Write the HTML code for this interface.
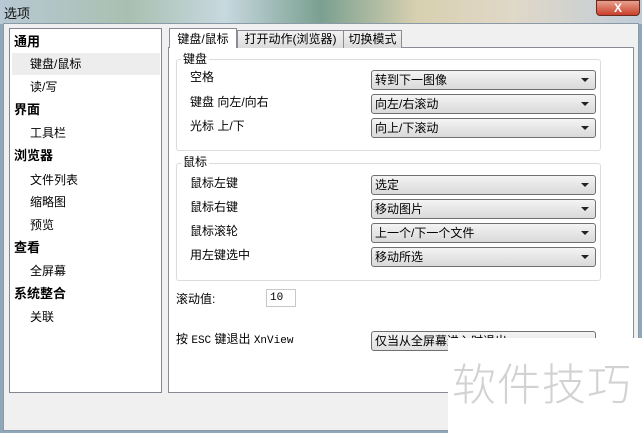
<!DOCTYPE html><html><head><meta charset="utf-8"><style>
*{margin:0;padding:0;box-sizing:border-box}
body{width:642px;height:433px;overflow:hidden;position:relative;font-family:"Liberation Sans","Noto Sans CJK SC",sans-serif;font-size:12px;color:#000;background:#8fa8b8}
.a{position:absolute;white-space:nowrap}
.title{left:0;top:0;width:642px;height:24px;background:linear-gradient(90deg,#b8c8d4,#a8c0b0 20%,#c8d8e0 35%,#7aa090 50%,#d8d0b0 65%,#e0d8c8 80%,#c0ccd8)}
.dlg{left:3px;top:23px;width:636px;height:408px;background:#f0f0f0;border:1px solid #8a9aa8}
.list{left:9px;top:28px;width:153px;height:365px;background:#fff;border:1px solid #828790}
.it{position:absolute;left:0;width:151px;height:22px;line-height:22px}
.b{font-weight:bold;padding-left:4px;font-size:13px}
.s{padding-left:20px}
.page{left:168px;top:47px;width:466px;height:346px;background:#fff;border:1px solid #898c95}
.tab{top:30px;height:18px;border:1px solid #898c95;border-bottom:none;background:linear-gradient(#f2f2f2,#dcdcdc);line-height:17px;text-align:center;font-size:12px;overflow:hidden}
.grp{border:1px solid #dcdcdc;border-radius:3px}
.lg{background:#fff;padding:0 2px;line-height:14px}
.sel{left:371px;width:225px;height:20px;border:1px solid #707070;border-radius:3px;background:linear-gradient(#f4f4f4,#e6e6e6 50%,#dadada);line-height:18px;padding-left:3px}
.sel:after{content:"";position:absolute;right:6px;top:7px;border-left:4px solid transparent;border-right:4px solid transparent;border-top:4px solid #222}
.lb{left:190px}
</style></head><body>
<div class="a title"></div>
<div class="a" style="left:4px;top:3px;font-size:13px;color:#111">选项</div>
<div class="a" style="left:596px;top:0;width:44px;height:16px;background:linear-gradient(#e8a090,#c8402a);border:1px solid #6a2a20;border-radius:0 0 4px 4px;color:#fff;text-align:center;font-weight:bold;line-height:14px">X</div>
<div class="a dlg"></div>
<div class="a list">
<div class="it b" style="top:2px">通用</div>
<div class="it s" style="top:24px;background:#ededed;left:2px;width:148px;padding-left:18px">键盘/鼠标</div>
<div class="it s" style="top:47px">读/写</div>
<div class="it b" style="top:70px">界面</div>
<div class="it s" style="top:93px">工具栏</div>
<div class="it b" style="top:116px">浏览器</div>
<div class="it s" style="top:140px">文件列表</div>
<div class="it s" style="top:162px">缩略图</div>
<div class="it s" style="top:185px">预览</div>
<div class="it b" style="top:208px">查看</div>
<div class="it s" style="top:231px">全屏幕</div>
<div class="it b" style="top:254px">系统整合</div>
<div class="it s" style="top:277px">关联</div>
</div>
<div class="a page"></div>
<div class="a tab" style="left:237px;width:107px">打开动作(浏览器)</div>
<div class="a tab" style="left:343px;width:59px">切换模式</div>
<div class="a tab" style="left:169px;top:28px;height:20px;width:68px;background:#fff;z-index:2;line-height:20px">键盘/鼠标</div>
<div class="a grp" style="left:176px;top:59px;width:425px;height:92px"></div>
<div class="a lg" style="left:181px;top:52px">键盘</div>
<div class="a lb" style="top:68px">空格</div>
<div class="a lb" style="top:93px">键盘 向左/向右</div>
<div class="a lb" style="top:117px">光标 上/下</div>
<div class="a sel" style="top:70px">转到下一图像</div>
<div class="a sel" style="top:94px">向左/右滚动</div>
<div class="a sel" style="top:118px">向上/下滚动</div>
<div class="a grp" style="left:176px;top:163px;width:425px;height:118px"></div>
<div class="a lg" style="left:181px;top:155px">鼠标</div>
<div class="a lb" style="top:174px">鼠标左键</div>
<div class="a lb" style="top:198px">鼠标右键</div>
<div class="a lb" style="top:222px">鼠标滚轮</div>
<div class="a lb" style="top:246px">用左键选中</div>
<div class="a sel" style="top:175px">选定</div>
<div class="a sel" style="top:199px">移动图片</div>
<div class="a sel" style="top:223px">上一个/下一个文件</div>
<div class="a sel" style="top:247px">移动所选</div>
<div class="a" style="left:176px;top:290px">滚动值:</div>
<div class="a" style="left:266px;top:289px;width:30px;height:18px;border:1px solid #c8c8c8;background:#fff;font-family:'Liberation Mono',monospace;font-size:11px;line-height:16px;padding-left:3px">10</div>
<div class="a" style="left:176px;top:330px;font-size:12px">按 <span style="font-family:'Liberation Mono',monospace;font-size:11px">ESC</span> 键退出 <span style="font-family:'Liberation Mono',monospace;font-size:11px">XnView</span></div>
<div class="a sel" style="left:371px;top:331px;height:20px;padding-left:3px;background:linear-gradient(#f4f4f4,#e0e0e0)">仅当从全屏幕进入时退出</div>
<div class="a" style="left:448px;top:338px;width:194px;height:95px;background:#fff"></div>
<div class="a" style="left:452px;top:355px;font-size:44px;color:#d2d2d2;letter-spacing:1px;font-family:'Noto Sans CJK SC',sans-serif;font-weight:300;line-height:52px">软件技巧</div>
</body></html>
